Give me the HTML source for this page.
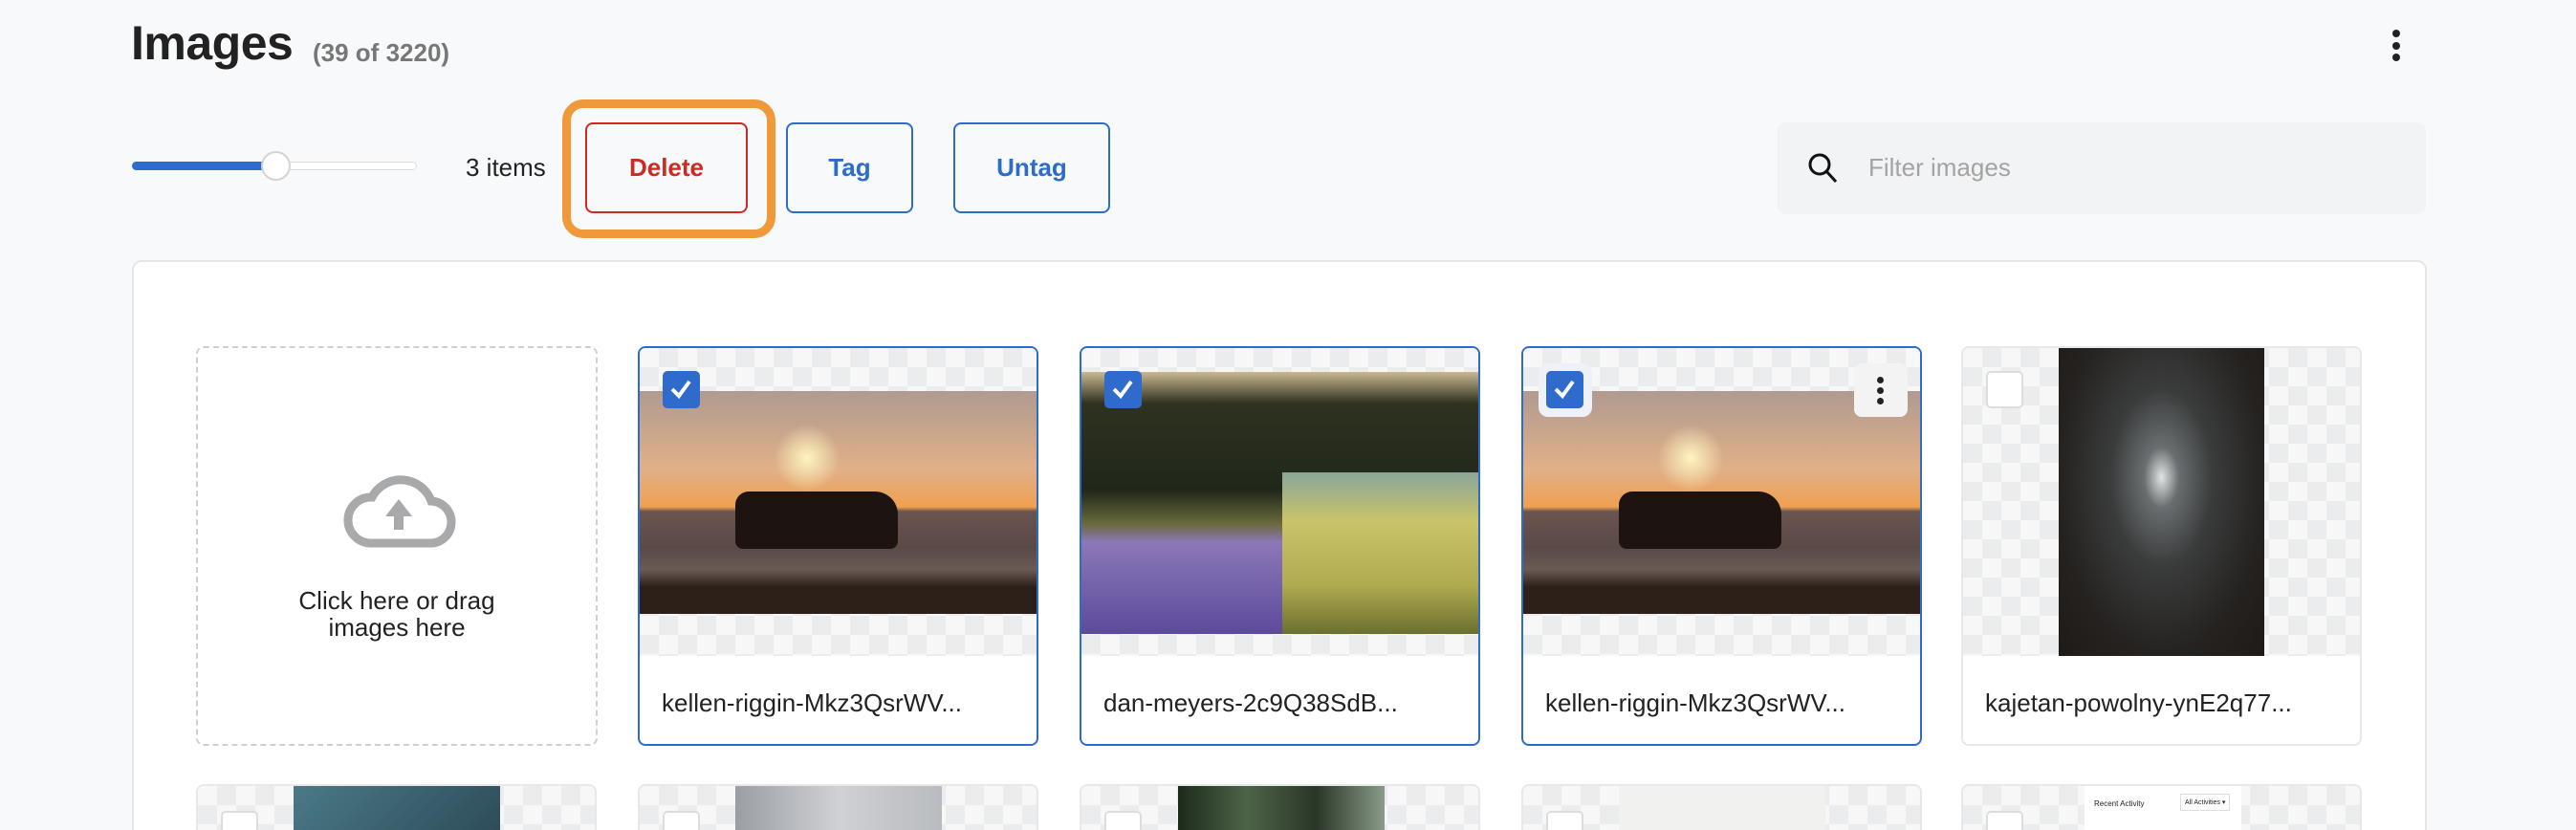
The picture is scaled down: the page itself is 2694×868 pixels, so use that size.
<!DOCTYPE html>
<html><head><meta charset="utf-8"><style>
*{box-sizing:border-box;margin:0;padding:0}
html,body{width:2694px;height:868px;overflow:hidden}
body{background:#f8f9fb;font-family:"Liberation Sans",sans-serif;color:#222}
#wrap{position:relative;width:2694px;height:868px;overflow:hidden}
.abs{position:absolute}
h1{position:absolute;left:137px;top:16px;font-size:50px;font-weight:700;color:#222;letter-spacing:-0.5px}
.cnt{position:absolute;left:327px;top:40px;font-size:26px;font-weight:700;color:#777}
.kebab{position:absolute;left:2502px;top:31px;width:9px}
.kebab i{display:block;width:8px;height:8px;border-radius:50%;background:#222;margin-bottom:4.5px}
.track{position:absolute;left:138px;top:169px;width:298px;height:9px;border-radius:5px;background:#fff;border:1px solid #ddd}
.fill{position:absolute;left:138px;top:169px;width:150px;height:9px;border-radius:5px 0 0 5px;background:#2f6bcc}
.thumb{position:absolute;left:273px;top:158px;width:31px;height:31px;border-radius:50%;background:#fff;border:2px solid #d4d4d4}
.items{position:absolute;left:487px;top:160px;font-size:26px;color:#222}
.orange{position:absolute;left:588px;top:104px;width:223px;height:145px;border:9px solid #f0993a;border-radius:22px}
.btn{position:absolute;top:128px;height:95px;border:2px solid #2d6bcc;border-radius:8px;font-size:26px;font-weight:700;color:#2d6bcc;display:flex;align-items:center;justify-content:center;background:#f8f9fb}
.search{position:absolute;left:1859px;top:128px;width:678px;height:96px;background:#f2f3f5;border-radius:9px}
.ph{position:absolute;left:1954px;top:160px;font-size:26px;color:#a3a3a3}
.panel{position:absolute;left:138px;top:272px;width:2400px;height:596px;background:#fff;border:2px solid #e6e6e8;border-bottom:none;border-radius:10px 10px 0 0}
.card{position:absolute;width:419px;height:418px;border:2px solid #e8e8ea;border-radius:8px;overflow:hidden;background:#fff}
.card.sel{border-color:#2d6bcc}
.card.r2{height:48px;border-bottom:none;border-radius:8px 8px 0 0}
.chk{position:absolute;background-image:linear-gradient(45deg,#ebecee 25%,transparent 25%,transparent 75%,#ebecee 75%),linear-gradient(45deg,#ebecee 25%,transparent 25%,transparent 75%,#ebecee 75%);background-size:40px 40px;background-position:0 0,20px 20px;background-color:#f7f7f8;left:0;top:0;width:100%;height:322px}
.r2 .chk{height:100%}
.lbl{position:absolute;left:23px;top:356px;font-size:26px;color:#222}
.cb{position:absolute;left:24px;top:24px;width:39px;height:39px;border-radius:5px;background:#2f6bcc}
.cb.off{background:#fff;border:2px solid #ddd}
.r2 .cb.off{top:26px;height:20px;border-bottom:none;border-radius:5px 5px 0 0}
.cb svg{position:absolute;left:7px;top:8px}
.upload{position:absolute;left:205px;top:362px;width:420px;height:418px;border:2px dashed #cfcfcf;border-radius:8px;background:#fff}
.sun{position:absolute;left:0;top:45px;width:100%;height:233px;background:linear-gradient(180deg,#b09a90 0%,#e0b088 35%,#f0a050 52%,#6a5450 54%,#5a4a46 70%,#6a5a54 80%,#2c2019 88%,#2c2019 100%)}
</style></head><body><div id="wrap">
<h1>Images</h1><div class="cnt">(39 of 3220)</div>
<div class="kebab"><i></i><i></i><i></i></div>
<div class="track"></div><div class="fill"></div><div class="thumb"></div>
<div class="items">3 items</div>
<div class="orange"></div>
<div class="btn" style="left:612px;width:170px;border-color:#cc2a22;color:#cc2a22">Delete</div>
<div class="btn" style="left:822px;width:133px">Tag</div>
<div class="btn" style="left:997px;width:164px">Untag</div>
<div class="search"><svg class="abs" style="left:30px;top:30px" width="36" height="36" viewBox="0 0 36 36"><circle cx="14" cy="14" r="10" fill="none" stroke="#111" stroke-width="3"/><line x1="21" y1="21" x2="31" y2="32" stroke="#111" stroke-width="3"/></svg></div>
<div class="ph">Filter images</div>
<div class="panel"></div>

<div class="upload">
<svg class="abs" style="left:150px;top:128px" width="120" height="82" viewBox="0 0 120 82"><path d="M30 76 H92 A22 22 0 0 0 94 32 A34 34 0 0 0 32 28 A24 24 0 0 0 30 76 Z" fill="none" stroke="#a8a9ab" stroke-width="9"/><path d="M60 30 L46 48 H55 V62 H65 V48 H74 Z" fill="#a8a9ab"/></svg>
<div class="abs" style="left:0;width:100%;top:250px;text-align:center;font-size:26px;line-height:28px;color:#222">Click here or drag<br>images here</div>
</div>

<div class="card sel" style="left:667px;top:362px"><div class="chk"></div>
<div class="sun"></div>
<div class="abs" style="left:140px;top:80px;width:70px;height:70px;border-radius:50%;background:radial-gradient(#fff4c0,rgba(255,210,120,0) 70%)"></div>
<div class="abs" style="left:100px;top:150px;width:170px;height:60px;background:#1d1412;border-radius:14px 24px 8px 8px"></div>
<div class="cb"><svg width="24" height="22"><path d="M3 11 L10 18 L21 3" stroke="#fff" stroke-width="4" fill="none"/></svg></div>
<div class="lbl">kellen-riggin-Mkz3QsrWV...</div></div>

<div class="card sel" style="left:1129px;top:362px"><div class="chk"></div>
<div class="abs" style="left:0;top:25px;width:100%;height:274px;background:linear-gradient(180deg,#c9b890 0%,#2f3220 12%,#20271a 45%,#6a6a3c 58%,#8a78b8 65%,#5d4a9a 100%)"></div>
<div class="abs" style="left:210px;top:130px;width:209px;height:169px;background:linear-gradient(180deg,#8aa59a 0%,#c9c46a 30%,#b0aa50 70%,#6a7030 100%)"></div>
<div class="cb"><svg width="24" height="22"><path d="M3 11 L10 18 L21 3" stroke="#fff" stroke-width="4" fill="none"/></svg></div>
<div class="lbl">dan-meyers-2c9Q38SdB...</div></div>

<div class="card sel" style="left:1591px;top:362px"><div class="chk"></div>
<div class="sun"></div>
<div class="abs" style="left:140px;top:80px;width:70px;height:70px;border-radius:50%;background:radial-gradient(#fff4c0,rgba(255,210,120,0) 70%)"></div>
<div class="abs" style="left:100px;top:150px;width:170px;height:60px;background:#1d1412;border-radius:14px 24px 8px 8px"></div>
<div class="abs" style="left:16px;top:16px;width:56px;height:56px;border-radius:10px;background:#eef2f8"></div>
<div class="cb"><svg width="24" height="22"><path d="M3 11 L10 18 L21 3" stroke="#fff" stroke-width="4" fill="none"/></svg></div>
<div class="abs" style="left:346px;top:16px;width:56px;height:56px;border-radius:8px;background:#f3f3f4"></div>
<div class="abs" style="left:370px;top:30px;width:8px"><i style="display:block;width:7px;height:7px;border-radius:50%;background:#222;margin-bottom:4px"></i><i style="display:block;width:7px;height:7px;border-radius:50%;background:#222;margin-bottom:4px"></i><i style="display:block;width:7px;height:7px;border-radius:50%;background:#222"></i></div>
<div class="lbl">kellen-riggin-Mkz3QsrWV...</div></div>

<div class="card" style="left:2051px;top:362px"><div class="chk"></div>
<div class="abs" style="left:100px;top:0;width:215px;height:322px;background:radial-gradient(ellipse at 50% 42%,#e0e4e4 0%,#6a6e70 12%,#3a3c3c 35%,#252220 70%,#1e1a18 100%)"></div>
<div class="cb off"></div>
<div class="lbl">kajetan-powolny-ynE2q77...</div></div>

<div class="card r2" style="left:205px;top:820px"><div class="chk"></div><div class="abs" style="left:100px;top:0;width:216px;height:46px;background:linear-gradient(135deg,#4a7a86,#2e4c5a)"></div><div class="cb off"></div></div>
<div class="card r2" style="left:667px;top:820px"><div class="chk"></div><div class="abs" style="left:100px;top:0;width:216px;height:46px;background:linear-gradient(90deg,#9a9ea4,#cfd1d4,#b8bbbf)"></div><div class="cb off"></div></div>
<div class="card r2" style="left:1129px;top:820px"><div class="chk"></div><div class="abs" style="left:101px;top:0;width:216px;height:46px;background:linear-gradient(90deg,#1d2a1c,#4d6448,#2a3628,#8a9a88)"></div><div class="cb off"></div></div>
<div class="card r2" style="left:1591px;top:820px"><div class="chk"></div><div class="abs" style="left:100px;top:0;width:216px;height:46px;background:#f1f2f0"></div><div class="cb off"></div></div>
<div class="card r2" style="left:2051px;top:820px"><div class="chk"></div><div class="abs" style="left:127px;top:0;width:164px;height:46px;background:#fff"><span class="abs" style="left:10px;top:14px;font-size:8px">Recent Activity</span><span class="abs" style="left:100px;top:8px;font-size:7px;border:1px solid #ddd;padding:4px">All Activities ▾</span></div><div class="cb off"></div></div>
</div></body></html>
